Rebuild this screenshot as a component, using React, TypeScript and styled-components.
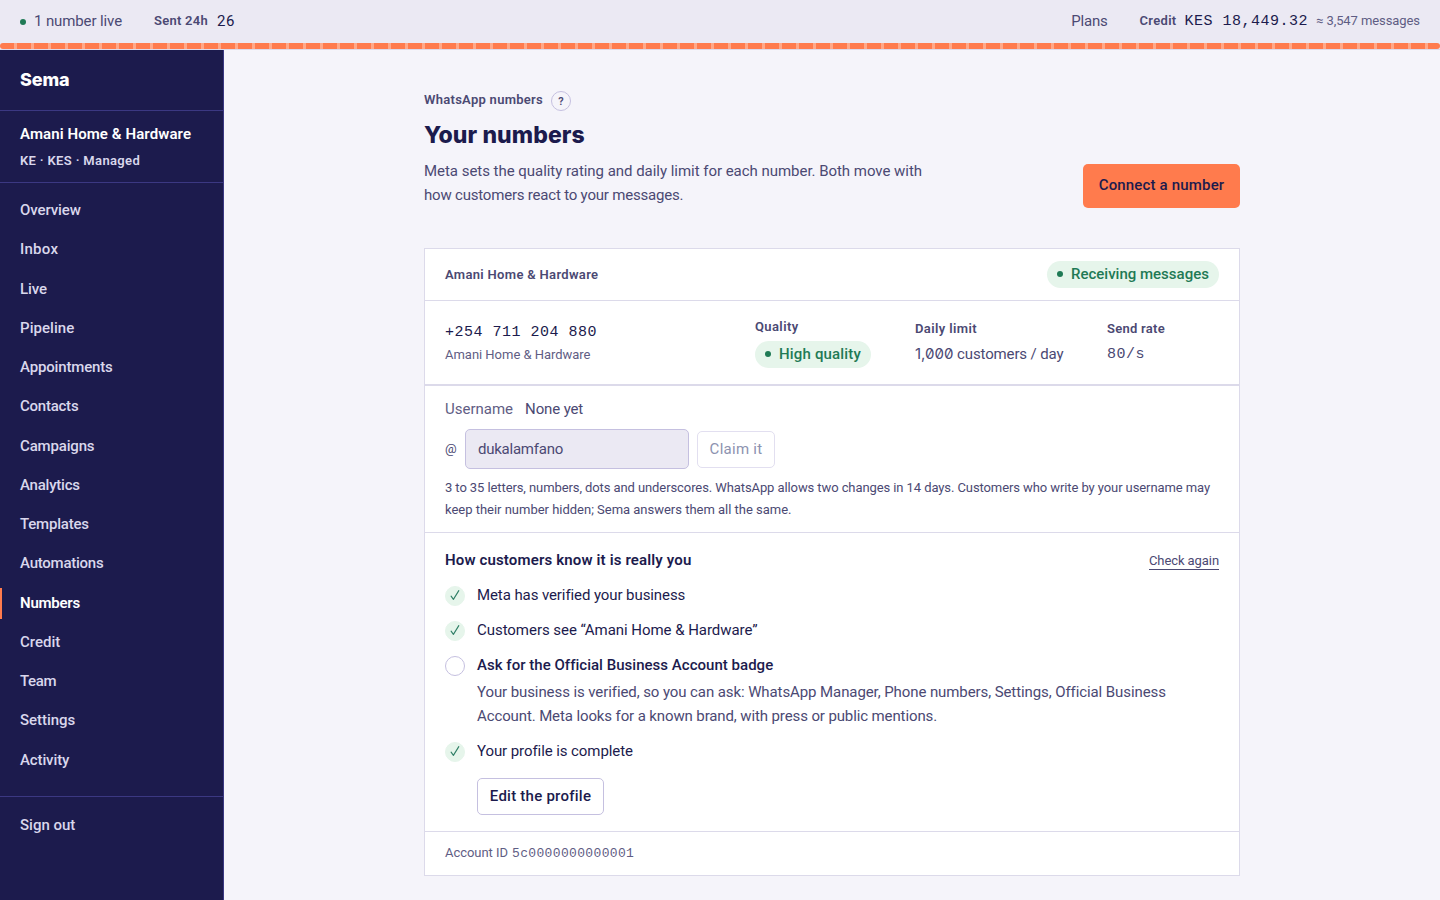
import React from "react";
import styled, { createGlobalStyle, css } from "styled-components";

const c = {
  ink: "#1c1b4d",
  muted: "#4b4973",
  soft: "#5f5d84",
  line: "#dcdaea",
  lineStrong: "#c5c0e0",
  page: "#f5f4fa",
  bar: "#ebe9f3",
  orange: "#ff7b4d",
  green: "#1f7a55",
  greenPale: "#e6f5eb",
  navLine: "#3b3882",
};

const GlobalStyle = createGlobalStyle`
  *, *::before, *::after { box-sizing: border-box; }
  body {
    margin: 0;
    background: ${c.page};
    color: ${c.ink};
    font: 400 15px/24px Roboto, "Liberation Sans", sans-serif;
  }
  h1, p, ul { margin: 0; padding: 0; }
  ul { list-style: none; }
  button, input { font: inherit; color: inherit; }
`;

type TextProps = { $track?: number; $size?: number; $weight?: number; $color?: string; $lh?: number };

const Text = styled.span<TextProps>`
  display: block;
  white-space: nowrap;
  font-size: ${(p) => p.$size ?? 15}px;
  font-weight: ${(p) => p.$weight ?? 400};
  line-height: ${(p) => p.$lh ?? 24}px;
  color: ${(p) => p.$color ?? c.ink};
  letter-spacing: ${(p) => p.$track ?? 0}px;
`;

const Mono = styled(Text)`
  height: 24px;
  padding-top: 1px;
  font-family: "Liberation Mono", monospace;
`;

const ZeroDigits = styled.span`
  font-family: Inter, sans-serif;
  font-feature-settings: "zero";
  letter-spacing: 0;
`;

const Shell = styled.div`
  display: flex;
  flex-direction: column;
  height: 900px;
  overflow: hidden;
`;

const TopBar = styled.header`
  flex: none;
  background: ${c.bar};
  border-bottom: 1px solid ${c.line};
`;

const TopRow = styled.div`
  display: flex;
  align-items: center;
  height: 43px;
  padding: 0 20px 1px;
`;

const TopGroup = styled.div<{ $gap: number; $ml?: string }>`
  display: flex;
  align-items: center;
  gap: ${(p) => p.$gap}px;
  margin-left: ${(p) => p.$ml ?? "0"};
`;

const Beads = styled.div`
  height: 6px;
  border-radius: 3px;
  background: repeating-linear-gradient(90deg, ${c.orange} 0 14px, #ffa888 14px 17px);
`;

const Dot = styled.span<{ $drop?: number }>`
  flex: none;
  width: 6px;
  height: 6px;
  margin-top: ${(p) => p.$drop ?? 0}px;
  border-radius: 50%;
  background: ${c.green};
`;

const Body = styled.div`
  display: flex;
  flex: 1;
  min-height: 0;
`;

const Sidebar = styled.aside`
  flex: none;
  width: 224px;
  background: ${c.ink};
  border-right: 1px solid ${c.navLine};
`;

const Brand = styled.div`
  display: flex;
  align-items: center;
  height: 61px;
  padding-left: 20px;
  border-bottom: 1px solid ${c.navLine};
  color: #fff;
  font: 800 18px/24px Inter, sans-serif;
  letter-spacing: -0.1px;
`;

const Workspace = styled.div`
  display: flex;
  flex-direction: column;
  gap: 6px;
  height: 72px;
  padding: 12px 0 0 20px;
  border-bottom: 1px solid ${c.navLine};
`;

const Nav = styled.ul`
  display: flex;
  flex-direction: column;
  gap: 8px;
  padding: 12px 0 20px;
`;

const navItem = css`
  height: 31.28px;
  padding-left: 18px;
  border-left: 2px solid transparent;
  line-height: 31px;
  font-weight: 460;
  color: #d9d7ec;
`;

const NavItem = styled.li<{ $active?: boolean; $track: number }>`
  ${navItem}
  letter-spacing: ${(p) => p.$track}px;
  ${(p) => p.$active && css`
    border-left-color: ${c.orange};
    color: #fff;
    font-weight: 600;
  `}
`;

const SignOut = styled.div`
  padding-top: 13px;
  border-top: 1px solid ${c.navLine};
`;

const Main = styled.main`
  width: 816px;
  margin: 0 auto 0 200px;
  padding-top: 41px;
`;

const PageHead = styled.div`
  display: flex;
  align-items: flex-end;
  justify-content: space-between;
`;

const Eyebrow = styled.div`
  display: flex;
  gap: 8px;
  height: 20px;
`;

const Help = styled.span`
  width: 20px;
  height: 20px;
  border: 1px solid ${c.lineStrong};
  border-radius: 50%;
  text-align: center;
  font: 600 11px/19px Roboto, sans-serif;
  color: ${c.muted};
`;

const Title = styled.h1`
  margin-top: 8px;
  font: 800 23px/32px Inter, sans-serif;
  letter-spacing: 0.08px;
`;

const Lede = styled.div`
  padding: 8px 0 1px;
`;

const PrimaryButton = styled.button`
  width: 157px;
  height: 44px;
  padding: 0 0 2px;
  border: 0;
  border-radius: 5px;
  background: ${c.orange};
  font-weight: 460;
  letter-spacing: 0.17px;
`;

const OutlineButton = styled.button<{ $width: number; $track: number }>`
  width: ${(p) => p.$width}px;
  height: 37px;
  padding: 0 0 1px;
  border: 1px solid ${c.lineStrong};
  border-radius: 5px;
  background: #fff;
  font-weight: 500;
  letter-spacing: ${(p) => p.$track}px;
  line-height: 24px;
  color: ${c.ink};
  &:disabled {
    padding: 0;
    border-color: #e2dff0;
    font-weight: 450;
    color: #8d93b0;
  }
`;

const Card = styled.section`
  margin-top: 40px;
  border: 1px solid ${c.line};
  background: #fff;
`;

const CardHead = styled.div`
  display: flex;
  align-items: center;
  justify-content: space-between;
  height: 52px;
  padding: 0 20px;
  border-bottom: 1px solid ${c.line};
`;

const Pill = styled.span<{ $track: number; $width: number }>`
  display: flex;
  align-items: center;
  gap: 8px;
  width: ${(p) => p.$width}px;
  height: 27px;
  padding: 0 10px 1px;
  border-radius: 14px;
  background: ${c.greenPale};
  color: ${c.green};
  font-weight: 500;
  letter-spacing: ${(p) => p.$track}px;
  white-space: nowrap;
`;

const Stats = styled.div`
  display: grid;
  grid-template-columns: 310px 160px 192px auto;
  align-items: center;
  height: 85px;
  padding: 0 20px;
  border-bottom: 2px solid ${c.line};
`;

const Stat = styled.div<{ $gap?: number }>`
  display: flex;
  flex-direction: column;
  gap: ${(p) => p.$gap ?? 0}px;
`;

const Username = styled.div`
  padding: 11px 20px;
  border-bottom: 1px solid ${c.line};
`;

const Inline = styled.div<{ $gap: number }>`
  display: flex;
  gap: ${(p) => p.$gap}px;
`;

const ClaimRow = styled.div`
  display: flex;
  align-items: center;
  gap: 8px;
  margin: 8px 0;
`;

const At = styled(Text)`
  width: 12px;
`;

const Input = styled.input`
  width: 224px;
  height: 40px;
  padding: 0 12px;
  border: 1px solid ${c.lineStrong};
  border-radius: 5px;
  background: ${c.bar};
  color: ${c.muted};
  letter-spacing: -0.24px;
  outline: 0;
`;

const Trust = styled.div`
  padding: 15px 20px 16px;
  border-bottom: 1px solid ${c.line};
`;

const TrustHead = styled.div`
  display: flex;
  justify-content: space-between;
  align-items: flex-start;
`;

const CheckAgain = styled(Text)`
  margin-top: 4px;
  border-bottom: 1px solid ${c.muted};
`;

const Steps = styled.ul`
  display: flex;
  flex-direction: column;
  gap: 11px;
  margin-top: 11px;
`;

const Step = styled.li`
  display: flex;
  gap: 12px;
`;

const Mark = styled.span<{ $done?: boolean }>`
  display: flex;
  align-items: center;
  justify-content: center;
  flex: none;
  width: 20px;
  height: 20px;
  margin-top: 3px;
  padding-bottom: 2px;
  border-radius: 50%;
  border: 1px solid ${(p) => (p.$done ? c.greenPale : c.lineStrong)};
  background: ${(p) => (p.$done ? c.greenPale : "#fff")};
`;

const StepNote = styled.div`
  margin-top: 3px;
`;

const StepAction = styled.div`
  display: flex;
  margin-top: 15px;
`;

const CardFoot = styled.div`
  display: flex;
  align-items: center;
  gap: 4px;
  height: 43px;
  padding: 0 20px 1px;
`;

const Tick = () => (
  <svg width="10" height="12" viewBox="0 0 10 12" fill="none">
    <path d="M1.1 7.1 L3.4 10.4 L8.8 1.6" stroke="#2f7f66" strokeWidth="1.1" strokeLinejoin="round" strokeLinecap="round" />
  </svg>
);

const nav: { label: string; track: number; active?: boolean }[] = [
  { label: "Overview", track: -0.1 },
  { label: "Inbox", track: 0.25 },
  { label: "Live", track: -0.05 },
  { label: "Pipeline", track: 0.06 },
  { label: "Appointments", track: -0.16 },
  { label: "Contacts", track: -0.24 },
  { label: "Campaigns", track: -0.16 },
  { label: "Analytics", track: -0.22 },
  { label: "Templates", track: -0.2 },
  { label: "Automations", track: -0.24 },
  { label: "Numbers", track: -0.23, active: true },
  { label: "Credit", track: 0 },
  { label: "Team", track: -0.35 },
  { label: "Settings", track: -0.03 },
  { label: "Activity", track: -0.12 },
];

export default function App() {
  return (
    <Shell>
      <GlobalStyle />
      <TopBar>
        <TopRow>
          <TopGroup $gap={8}>
            <Dot $drop={1} />
            <Text $color={c.muted} $track={-0.11}>1 number live</Text>
          </TopGroup>
          <TopGroup $gap={9} $ml="32px">
            <Text $size={13} $weight={600} $color={c.muted} $track={0.26}>Sent 24h</Text>
            <Text $track={0.57}>26</Text>
          </TopGroup>
          <TopGroup $gap={8} $ml="auto">
            <Text $color={c.muted} $track={-0.2}>Plans</Text>
            <TopGroup $gap={8} $ml="24px">
              <Text $size={13} $weight={600} $color={c.muted} $track={0.31}>Credit</Text>
              <Mono $track={0.5}>KES 18,449.32</Mono>
              <Text $size={13} $color={c.soft} $track={-0.08}>≈ 3,547 messages</Text>
            </TopGroup>
          </TopGroup>
        </TopRow>
        <Beads />
      </TopBar>
      <Body>
        <Sidebar>
          <Brand>Sema</Brand>
          <Workspace>
            <Text $weight={600} $color="#fff" $lh={22} $track={0.09}>Amani Home &amp; Hardware</Text>
            <Text $size={13} $weight={600} $color="#d9d7ec" $lh={20} $track={0.34}>KE · KES · Managed</Text>
          </Workspace>
          <Nav>
            {nav.map((n) => (
              <NavItem key={n.label} $track={n.track} $active={n.active}>{n.label}</NavItem>
            ))}
          </Nav>
          <SignOut>
            <NavItem as="div" $track={0}>Sign out</NavItem>
          </SignOut>
        </Sidebar>
        <Main>
          <PageHead>
            <div>
              <Eyebrow>
                <Text $size={13} $weight={600} $color={c.muted} $lh={18} $track={0.28}>WhatsApp numbers</Text>
                <Help>?</Help>
              </Eyebrow>
              <Title>Your numbers</Title>
              <Lede>
                <Text as="p" $color={c.muted} $track={-0.033}>Meta sets the quality rating and daily limit for each number. Both move with</Text>
                <Text as="p" $color={c.muted} $track={-0.2}>how customers react to your messages.</Text>
              </Lede>
            </div>
            <PrimaryButton>Connect a number</PrimaryButton>
          </PageHead>
          <Card>
            <CardHead>
              <Text $size={13} $weight={600} $color={c.muted} $track={0.32}>Amani Home &amp; Hardware</Text>
              <Pill $track={0} $width={172}><Dot />Receiving messages</Pill>
            </CardHead>
            <Stats>
              <Stat>
                <Mono $track={0.5}>+254 711 204 880</Mono>
                <Text $size={13} $color={c.soft} $lh={22} $track={-0.025}>Amani Home &amp; Hardware</Text>
              </Stat>
              <Stat $gap={4}>
                <Text $size={13} $weight={600} $color={c.muted} $lh={20} $track={0.39}>Quality</Text>
                <Pill $track={0.17} $width={116}><Dot />High quality</Pill>
              </Stat>
              <Stat $gap={3}>
                <Text $size={13} $weight={600} $color={c.muted} $lh={20} $track={0.39}>Daily limit</Text>
                <Text $color={c.muted} $track={-0.13}><ZeroDigits>1,000</ZeroDigits> customers / day</Text>
              </Stat>
              <Stat $gap={3}>
                <Text $size={13} $weight={600} $color={c.muted} $lh={20} $track={0.27}>Send rate</Text>
                <Mono $color={c.muted} $track={0.5}>80/s</Mono>
              </Stat>
            </Stats>
            <Username>
              <Inline $gap={12}>
                <Text $color={c.soft} $track={0}>Username</Text>
                <Text $color={c.muted} $track={-0.13}>None yet</Text>
              </Inline>
              <ClaimRow>
                <At $size={13} $color={c.muted}>@</At>
                <Input value="dukalamfano" readOnly />
                <OutlineButton $width={78} $track={0.27} disabled>Claim it</OutlineButton>
              </ClaimRow>
              <Text as="p" $size={13} $color={c.muted} $lh={22} $track={-0.089}>
                3 to 35 letters, numbers, dots and underscores. WhatsApp allows two changes in 14 days. Customers who write by your username may
              </Text>
              <Text as="p" $size={13} $color={c.muted} $lh={22} $track={-0.015}>
                keep their number hidden; Sema answers them all the same.
              </Text>
            </Username>
            <Trust>
              <TrustHead>
                <Text $weight={600} $track={0.15}>How customers know it is really you</Text>
                <CheckAgain $size={13} $color={c.muted} $lh={17} $track={-0.083}>Check again</CheckAgain>
              </TrustHead>
              <Steps>
                <Step>
                  <Mark $done><Tick /></Mark>
                  <Text $track={-0.09}>Meta has verified your business</Text>
                </Step>
                <Step>
                  <Mark $done><Tick /></Mark>
                  <Text $track={-0.045}>Customers see “Amani Home &amp; Hardware”</Text>
                </Step>
                <Step>
                  <Mark />
                  <div>
                    <Text $weight={500} $track={0.025}>Ask for the Official Business Account badge</Text>
                    <StepNote>
                      <Text as="p" $color={c.muted} $track={-0.09}>
                        Your business is verified, so you can ask: WhatsApp Manager, Phone numbers, Settings, Official Business
                      </Text>
                      <Text as="p" $color={c.muted} $track={-0.115}>
                        Account. Meta looks for a known brand, with press or public mentions.
                      </Text>
                    </StepNote>
                  </div>
                </Step>
                <Step>
                  <Mark $done><Tick /></Mark>
                  <div>
                    <Text $track={-0.08}>Your profile is complete</Text>
                    <StepAction>
                      <OutlineButton $width={127} $track={0.243}>Edit the profile</OutlineButton>
                    </StepAction>
                  </div>
                </Step>
              </Steps>
            </Trust>
            <CardFoot>
              <Text $size={13} $color={c.soft} $track={-0.04}>Account ID</Text>
              <Mono $size={13} $color={c.soft} $track={0.35}>5c0000000000001</Mono>
            </CardFoot>
          </Card>
        </Main>
      </Body>
    </Shell>
  );
}
